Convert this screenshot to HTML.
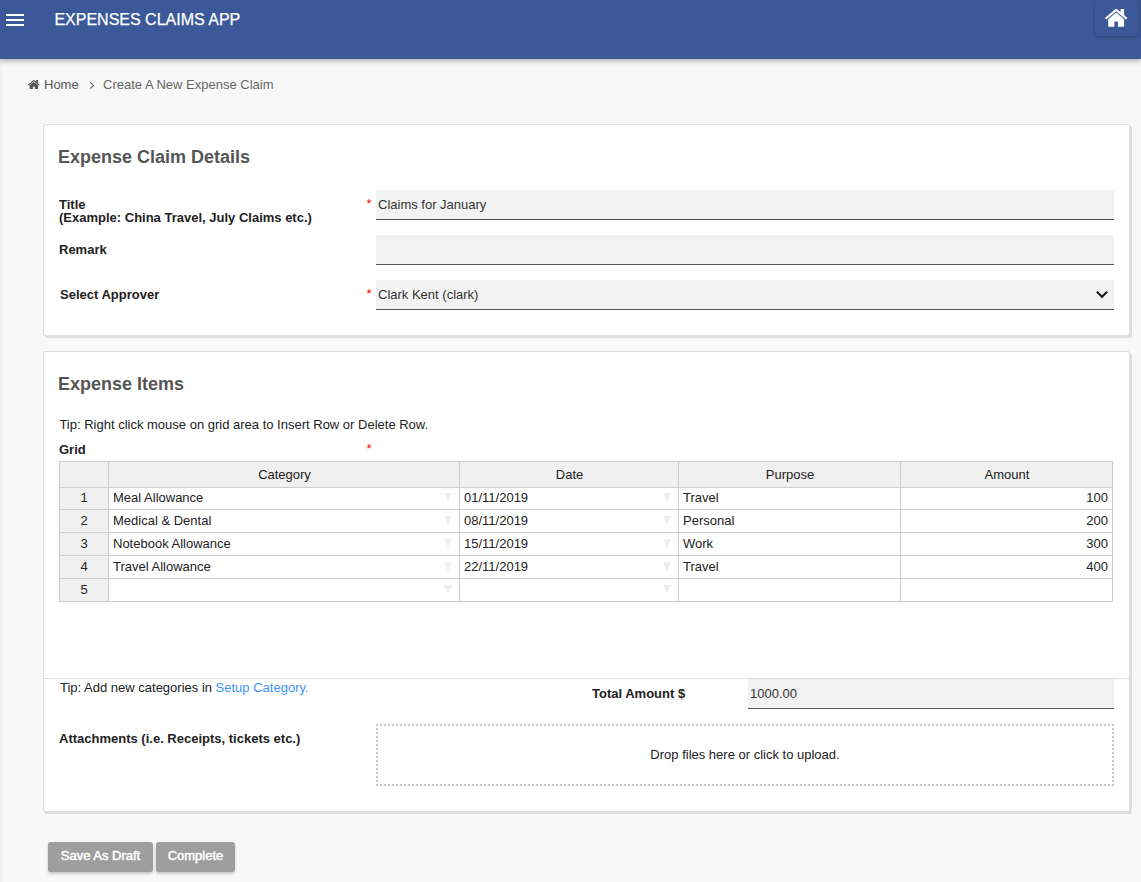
<!DOCTYPE html>
<html lang="en">
<head>
<meta charset="utf-8">
<title>Expenses Claims App</title>
<style>
*{box-sizing:border-box;margin:0;padding:0}
html,body{width:1141px;height:882px;overflow:hidden}
body{background:#f8f8f8;font-family:"Liberation Sans",Arial,sans-serif;font-size:13px;color:#222;position:relative}
.abs{position:absolute}
/* header */
#hdr{position:absolute;left:0;top:0;width:1141px;height:59px;background:#3b5998;box-shadow:0 2px 5px rgba(0,0,0,.3)}
#burger i{position:absolute;left:6px;width:18px;height:2px;background:#fff;display:block}
#apptitle{position:absolute;left:54.400px;top:10px;font-size:16px;line-height:20px;color:#fff;white-space:nowrap;letter-spacing:0;-webkit-text-stroke:0.250px #fff}
#homebtn{position:absolute;left:1095px;top:0;width:42.500px;height:36px;border-radius:4px;background:#3b5998;box-shadow:0 1px 3px rgba(0,0,0,.28)}
#homebtn svg{position:absolute;left:10.400px;top:9.450px}
/* breadcrumb */
#bc{position:absolute;left:0;top:77px;height:16px;line-height:16px;font-size:13px;color:#555;white-space:nowrap}
#bc span{position:absolute;top:0}
/* cards */
.card{position:absolute;left:43px;width:1087px;background:#fff;border:1px solid #dedede;border-radius:2px;box-shadow:2px 2px 0 #dedede,1px 1px 0 #dedede}
.h2{position:absolute;left:58px;font-size:18px;font-weight:bold;color:#555;line-height:22px;white-space:nowrap}
.lbl{position:absolute;font-weight:bold;font-size:13px;line-height:13px;color:#222;white-space:nowrap}
.txt{position:absolute;font-size:13px;line-height:15px;color:#222;white-space:nowrap}
.req{position:absolute;color:#f00;font-size:13px;line-height:15px}
.inp{position:absolute;left:376px;width:738px;height:30px;background:#f2f2f2;border-bottom:1px solid #555;font-size:13px;line-height:29px;color:#333;padding-left:2px;white-space:nowrap}
/* grid */
#grid{position:absolute;left:59px;top:461px;border-collapse:separate;border-spacing:0;table-layout:fixed;font-size:13px;color:#222}
#grid th,#grid td{border-right:1px solid #ccc;border-bottom:1px solid #ccc;height:23px;line-height:20px;padding:1px 4px 1px;white-space:nowrap;overflow:hidden;font-weight:normal;position:relative}
#grid th{background:#f0f0f0;text-align:center}
#grid tr:first-child th{border-top:1px solid #ccc;height:27px;line-height:22px;padding:1px 4px 1px 5px}
#grid tr:nth-child(2) th,#grid tr:nth-child(2) td{height:22px;line-height:19px;padding:0 4px 2px}
#grid th:first-child{border-left:1px solid #ccc}
#grid td{background:#fff;text-align:left}
#grid td.num{text-align:right}
#grid td.dd:after{content:"";position:absolute;right:6.700px;top:6px;border-left:4.700px solid transparent;border-right:4.700px solid transparent;border-top:9.200px solid #eee}
#grid tr:nth-child(2) td.dd:after{top:5px}
/* buttons */
.btn{position:absolute;top:842px;height:30px;background:#9e9e9e;color:#fff;font-size:13px;font-weight:normal;line-height:28px;text-align:center;border-radius:3px;box-shadow:0 2px 3px rgba(0,0,0,.2);-webkit-text-stroke:0.350px #fff;text-shadow:0 0 1px rgba(255,255,255,.5);white-space:nowrap}
</style>
</head>
<body>
<div id="hdr">
  <div id="burger"><i style="top:14px"></i><i style="top:19px"></i><i style="top:24px"></i></div>
  <div id="apptitle">EXPENSES CLAIMS APP</div>
  <div id="homebtn">
    <svg width="22.300" height="17.750" viewBox="90 253 1612 1283"><path fill="#fff" d="M1472 992v480q0 26-19 45t-45 19h-384v-384h-256v384h-384q-26 0-45-19t-19-45v-480q0-1 .5-3t.5-3l575-474 575 474q1 2 1 6zm223-69l-62 74q-8 9-21 11h-3q-13 0-21-7l-692-577-692 577q-12 8-24 7-13-2-21-11l-62-74q-8-10-7-23.500t11-21.500l719-599q32-26 76-26t76 26l244 204v-195q0-14 9-23t23-9h192q14 0 23 9t9 23v408l219 182q10 8 11 21.500t-7 23.500z"/></svg>
  </div>
  <div class="abs" style="left:1141.500px;top:0;width:42px;height:36px;border-radius:4px;box-shadow:0 1px 3px rgba(0,0,0,.28)"></div>
</div>

<div class="abs" style="left:0;top:59px;width:4px;height:823px;background:linear-gradient(to right,rgba(0,0,0,.05),rgba(0,0,0,.02) 40%,rgba(0,0,0,0))"></div>

<div id="bc">
  <svg class="abs" style="left:28.050px;top:2.700px" width="11.700" height="9.300" viewBox="90 253 1612 1283"><path fill="#555" d="M1472 992v480q0 26-19 45t-45 19h-384v-384h-256v384h-384q-26 0-45-19t-19-45v-480q0-1 .5-3t.5-3l575-474 575 474q1 2 1 6zm223-69l-62 74q-8 9-21 11h-3q-13 0-21-7l-692-577-692 577q-12 8-24 7-13-2-21-11l-62-74q-8-10-7-23.500t11-21.500l719-599q32-26 76-26t76 26l244 204v-195q0-14 9-23t23-9h192q14 0 23 9t9 23v408l219 182q10 8 11 21.500t-7 23.500z"/></svg>
  <span style="left:44px">Home</span>
  <svg class="abs" style="left:89px;top:3.600px" width="6" height="9" viewBox="0 0 6 9"><path d="M1.200 1.100 4.500 4.400 1.200 7.700" fill="none" stroke="#666" stroke-width="1.100"/></svg>
  <span style="left:103px;color:#666">Create A New Expense Claim</span>
</div>

<!-- card 1 -->
<div class="card" style="top:124px;height:212px"></div>
<div class="h2" style="top:146px">Expense Claim Details</div>
<div class="lbl" style="left:59px;top:198px">Title<br>(Example: China Travel, July Claims etc.)</div>
<div class="lbl" style="left:59px;top:243px">Remark</div>
<div class="lbl" style="left:60px;top:288px">Select Approver</div>
<div class="req" style="left:366.500px;top:196px">*</div>
<div class="req" style="left:366.500px;top:286px">*</div>
<div class="inp" style="top:190px">Claims for January</div>
<div class="inp" style="top:235px"></div>
<div class="inp" style="top:280px">Clark Kent (clark)
  <svg class="abs" style="left:719px;top:9.800px" width="14" height="9" viewBox="0 0 14 9"><path d="M1.800 1.600 7 6.800 12.200 1.600" fill="none" stroke="#111" stroke-width="2"/></svg>
</div>

<!-- card 2 -->
<div class="card" style="top:351px;height:461px"></div>
<div class="h2" style="top:373px">Expense Items</div>
<div class="txt" style="left:59.400px;top:417px">Tip: Right click mouse on grid area to Insert Row or Delete Row.</div>
<div class="lbl" style="left:59px;top:443px">Grid</div>
<div class="req" style="left:366.500px;top:440.600px">*</div>

<table id="grid">
<colgroup><col style="width:50px"><col style="width:351px"><col style="width:219px"><col style="width:222px"><col style="width:212px"></colgroup>
<tr><th></th><th>Category</th><th>Date</th><th>Purpose</th><th>Amount</th></tr>
<tr><th>1</th><td class="dd">Meal Allowance</td><td class="dd">01/11/2019</td><td>Travel</td><td class="num">100</td></tr>
<tr><th>2</th><td class="dd">Medical &amp; Dental</td><td class="dd">08/11/2019</td><td>Personal</td><td class="num">200</td></tr>
<tr><th>3</th><td class="dd">Notebook Allowance</td><td class="dd">15/11/2019</td><td>Work</td><td class="num">300</td></tr>
<tr><th>4</th><td class="dd">Travel Allowance</td><td class="dd">22/11/2019</td><td>Travel</td><td class="num">400</td></tr>
<tr><th>5</th><td class="dd"></td><td class="dd"></td><td></td><td class="num"></td></tr>
</table>

<div class="abs" style="left:44px;top:678px;width:1086px;height:1px;background:#ddd"></div>
<div class="txt" style="left:60px;top:680px">Tip: Add new categories in <span style="color:#3c96f5">Setup Category.</span></div>
<div class="lbl" style="left:592px;top:687px">Total Amount $</div>
<div class="inp" style="left:748px;width:366px;top:679px">1000.00</div>
<div class="lbl" style="left:59px;top:732px">Attachments (i.e. Receipts, tickets etc.)</div>
<div class="abs" style="left:376px;top:724px;width:738px;height:62px;border:2px dotted #c6c6c6;text-align:center;line-height:58px;font-size:13px;color:#222">Drop files here or click to upload.</div>

<div class="btn" style="left:48px;width:105px">Save As Draft</div>
<div class="btn" style="left:156px;width:79px">Complete</div>
</body>
</html>
